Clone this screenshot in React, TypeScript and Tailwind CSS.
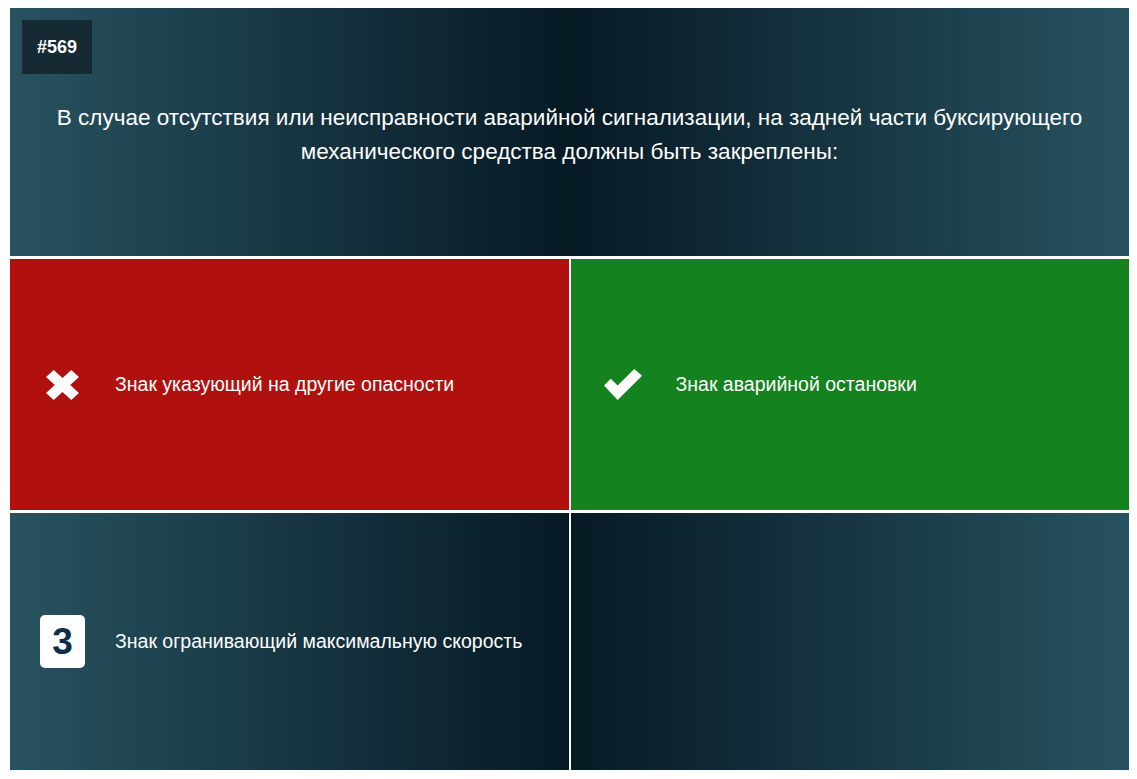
const grad = "bg-[linear-gradient(to_right,#285260_0%,#061a24_50%,#285260_100%)]";

function XIcon() {
  return (
    <svg width="33" height="30" viewBox="3 3 30 30" preserveAspectRatio="none">
      <path d="M3 10 L10 3 L18 11 L26 3 L33 10 L25 18 L33 26 L26 33 L18 25 L10 33 L3 26 L11 18 Z" fill="#fff" />
    </svg>
  );
}

function CheckIcon() {
  return (
    <svg width="41" height="35" viewBox="0 0 42 36" preserveAspectRatio="none">
      <path d="M1 19 L8 12 L15 19 L32 2 L40 9 L15 34 Z" fill="#fff" />
    </svg>
  );
}

function Answer({ bg, icon, text }: { bg: string; icon: React.ReactNode; text: string }) {
  return (
    <div className={`${bg} flex items-center h-full`}>
      <div className="w-[105px] flex justify-center">{icon}</div>
      <span className="text-[19.5px] text-white">{text}</span>
    </div>
  );
}

export default function App() {
  return (
    <div className="w-[1137px] h-[779px] bg-white pt-[8px] pl-[10px] font-['Liberation_Sans',Arial,sans-serif]">
      <div className="w-[1119px] flex flex-col gap-[3px]">
        <header className={`${grad} h-[248px] relative`}>
          <div className="absolute left-[12px] top-[12px] w-[70px] h-[54px] bg-[#162a33] flex items-center justify-center">
            <span className="text-white font-bold text-[18px]">#569</span>
          </div>
          <p className="pt-[93px] px-[30px] text-center text-white text-[22.5px] leading-[34px]">
            В случае отсутствия или неисправности аварийной сигнализации, на задней части буксирующего механического средства должны быть закреплены:
          </p>
        </header>
        <div className="grid grid-cols-2 gap-x-[2px] gap-y-[3px] grid-rows-[251px_257px]">
          <Answer bg="bg-[#b0100e]" icon={<XIcon />} text="Знак указующий на другие опасности" />
          <Answer bg="bg-[#14821e]" icon={<CheckIcon />} text="Знак аварийной остановки" />
          <div className="bg-[linear-gradient(to_right,#285260_0%,#061a24_100%)] flex items-center h-full">
            <div className="w-[105px] flex justify-center">
              <div className="w-[45px] h-[53px] bg-white rounded-[5px] flex items-center justify-center">
                <span className="text-[#0d2d4a] font-bold text-[37px] leading-none">3</span>
              </div>
            </div>
            <span className="text-[19.5px] text-white">Знак огранивающий максимальную скорость</span>
          </div>
          <div className="bg-[linear-gradient(to_right,#061a24_0%,#285260_100%)] h-full" />
        </div>
      </div>
    </div>
  );
}
